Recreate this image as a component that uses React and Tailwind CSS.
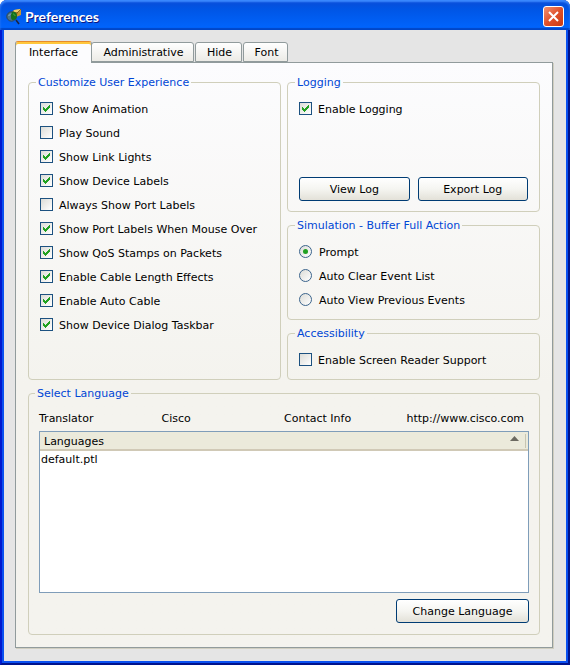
import { useState } from "react";

const experienceOptions = [
  ["Show Animation", true],
  ["Play Sound", false],
  ["Show Link Lights", true],
  ["Show Device Labels", true],
  ["Always Show Port Labels", false],
  ["Show Port Labels When Mouse Over", true],
  ["Show QoS Stamps on Packets", true],
  ["Enable Cable Length Effects", true],
  ["Enable Auto Cable", true],
  ["Show Device Dialog Taskbar", true],
];

const bufferActions = ["Prompt", "Auto Clear Event List", "Auto View Previous Events"];

function Group({ title, className = "", children }) {
  return (
    <fieldset className={`min-w-0 rounded-[4px] border border-[#d0cfbb] ${className}`}>
      <legend className="-ml-1 h-[14px] px-[2px] leading-4 text-[#0046d5]">{title}</legend>
      {children}
    </fieldset>
  );
}

function CheckBox({ label, defaultChecked }) {
  return (
    <label className="flex h-6 items-center gap-[6px]">
      <span className="mb-px grid size-[13px] shrink-0">
        <input
          type="checkbox"
          defaultChecked={defaultChecked}
          className="peer size-[13px] appearance-none border border-[#1c5180] bg-linear-to-br from-[#dcdcd7] to-white [grid-area:1/1]"
        />
        <svg
          viewBox="0 0 13 13"
          shapeRendering="crispEdges"
          aria-hidden="true"
          className="pointer-events-none hidden size-[13px] [grid-area:1/1] peer-checked:block"
        >
          <path
            fill="#21a121"
            d="M3 5h1v3h-1zM4 6h1v3h-1zM5 7h1v3h-1zM6 6h1v3h-1zM7 5h1v3h-1zM8 4h1v3h-1zM9 3h1v3h-1z"
          />
        </svg>
      </span>
      <span className="pt-[2px]">{label}</span>
    </label>
  );
}

function Radio({ label, checked, onChange }) {
  return (
    <label className="flex h-6 items-center gap-[7px]">
      <span className="mb-px grid size-[13px] shrink-0 place-items-center">
        <input
          type="radio"
          name="buffer-action"
          checked={checked}
          onChange={onChange}
          className="peer size-[13px] appearance-none rounded-full border border-[#3b648c] bg-linear-to-br from-[#dcdcd7] to-white [grid-area:1/1]"
        />
        <span className="pointer-events-none hidden size-[5px] rounded-full bg-[#21a121] [grid-area:1/1] peer-checked:block" />
      </span>
      <span className="pt-[2px]">{label}</span>
    </label>
  );
}

function PushButton({ className = "", children }) {
  return (
    <button
      type="button"
      className={`h-6 rounded-[3px] border border-[#003c74] bg-linear-to-b from-white via-[#f5f5f1] to-[#e3e1d8] pt-[2px] ${className}`}
    >
      {children}
    </button>
  );
}

function Tab({ active, children, className = "", onClick }) {
  return (
    <button
      type="button"
      role="tab"
      aria-selected={active}
      onClick={onClick}
      className={`rounded-t-[3px] border border-[#919b9c] ${
        active
          ? "z-10 -mb-px h-[22px] border-t-[#e68b2c] border-b-0 bg-[#fcfcfe] shadow-[inset_0_2px_0_#ffc73c]"
          : "h-[20px] bg-linear-to-b from-white to-[#ecebe6] pt-[2px] pl-[2px]"
      } ${className}`}
    >
      {children}
    </button>
  );
}

function AppIcon() {
  return (
    <svg viewBox="0 0 16 16" className="size-4" aria-hidden="true">
      <path d="M6 3 8 1l7-1v6l-5 2-4-2z" fill="#c8962f" />
      <path d="m8 1 7-1-3 3-5 1z" fill="#f0cf6c" />
      <path d="m7 3 4 1 4-4M11 4l-1 4" fill="none" stroke="#5a3f12" strokeWidth="0.7" />
      <circle cx="5.500" cy="7.500" r="4.700" fill="#4d7488" stroke="#2c4656" />
      <path d="M6 3c3-1 5 1 5 4s-2 4-4 4-2-2-2-4 0-3 1-4z" fill="#16701c" />
      <path d="M7 5c1 0 2 1 2 2" fill="none" stroke="#48b04a" />
      <path d="M2.500 7 5 4.500" stroke="#8fb6c9" />
      <path d="m10 11 3 4" stroke="#1a2340" strokeWidth="1.500" />
    </svg>
  );
}

const tabs = [
  ["Interface", "w-[77px]"],
  ["Administrative", "w-[103px] -ml-px"],
  ["Hide", "w-[47px] ml-px"],
  ["Font", "w-[45px] ml-px"],
];

export default function App() {
  const [tab, setTab] = useState("Interface");
  const [action, setAction] = useState("Prompt");

  return (
    <main className="flex min-h-screen flex-col rounded-t-[7px] border-x-2 border-b-2 border-[#0019cf] border-r-[#00138c] border-b-[#00138c] bg-[#e5e5e5] font-['DejaVu_Sans',Verdana,sans-serif] text-[11px] leading-[14px] text-black">
      <header className="-mx-[2px] flex h-[30px] items-center gap-[3px] rounded-t-[7px] bg-linear-to-b from-[#0a4bd6] from-0% via-[#0055e5] via-30% to-[#0066ff] pt-[3px] pr-[6px] pl-[6px] shadow-[inset_0_2px_2px_#3d8bff,inset_0_-2px_1px_#0046c8]">
        <AppIcon />
        <h1 className="flex-1 font-['Lato','Noto_Sans',sans-serif] text-[14px] font-bold text-white [text-shadow:1px_1px_#0a1883]">
          Preferences
        </h1>
        <button
          type="button"
          aria-label="Close"
          className="grid size-[21px] place-items-center rounded-[3px] border border-white bg-linear-to-br from-[#f0906f] via-[#e0502a] to-[#c93a10]"
        >
          <svg viewBox="0 0 11 11" className="size-[11px]" aria-hidden="true">
            <path d="m1 1 9 9M10 1l-9 9" stroke="white" strokeWidth="2" />
          </svg>
        </button>
      </header>

      <div className="flex flex-1 flex-col border-x-2 border-b-2 border-[#0a50f0] pt-[11px] pr-[13px] pb-[13px] pl-[11px]">
        <div role="tablist" className="flex items-end">
          {tabs.map(([name, size]) => (
            <Tab key={name} active={tab === name} className={size} onClick={() => setTab(name)}>
              {name}
            </Tab>
          ))}
        </div>

        <div
          role="tabpanel"
          className="flex flex-1 flex-col gap-[6px] border border-[#919b9c] bg-linear-to-b from-[#fcfcfe] to-[#f4f3ee] to-55% p-3 shadow-[1px_1px_0_#d0cec0]"
        >
          <div className="grid grid-cols-2 gap-[6px]">
            <Group title="Customize User Experience" className="px-[11px] pb-[41px]">
              <div className="pt-2">
                {experienceOptions.map(([label, on]) => (
                  <CheckBox key={label} label={label} defaultChecked={on} />
                ))}
              </div>
            </Group>

            <div className="flex flex-col gap-[6px]">
              <Group title="Logging" className="flex-1 px-[11px] pb-[10px]">
                <div className="pt-2">
                  <CheckBox label="Enable Logging" defaultChecked />
                  <div className="mt-14 grid grid-cols-2 gap-2">
                    <PushButton>View Log</PushButton>
                    <PushButton>Export Log</PushButton>
                  </div>
                </div>
              </Group>

              <Group title="Simulation - Buffer Full Action" className="px-[11px] pb-[7px]">
                <div className="pt-2">
                  {bufferActions.map((name) => (
                    <Radio
                      key={name}
                      label={name}
                      checked={action === name}
                      onChange={() => setAction(name)}
                    />
                  ))}
                </div>
              </Group>

              <Group title="Accessibility" className="px-[11px] pb-[7px]">
                <div className="pt-2">
                  <CheckBox label="Enable Screen Reader Support" />
                </div>
              </Group>
            </div>
          </div>

          <Group title="Select Language" className="flex flex-1 flex-col px-[10px] pb-[11px]">
            <div className="grid grid-cols-4 pt-3 pb-[5px] whitespace-nowrap">
              <span>Translator</span>
              <span>Cisco</span>
              <span>Contact Info</span>
              <span>http://www.cisco.com</span>
            </div>
            <div className="min-h-[162px] flex-1 border border-[#7f9db9] bg-white">
              <table className="w-full border-collapse text-left">
                <thead>
                  <tr className="h-[18px] border-b-2 border-[#d0c9b6] bg-[#ebeadb]">
                    <th className="px-1 py-0 font-normal" aria-sort="ascending">
                      <span className="flex items-center justify-between pt-[2px]">
                        Languages
                        <svg viewBox="0 0 9 5" className="mr-[2px] mb-[6px] h-[5px] w-[9px]" aria-hidden="true">
                          <path d="M0 5 4.500 0 9 5z" fill="#6b6960" />
                        </svg>
                      </span>
                    </th>
                    <th className="w-[3px] p-0" aria-hidden="true">
                      <span className="block h-[14px] w-px bg-[#c7c5b2]" />
                    </th>
                  </tr>
                </thead>
                <tbody>
                  <tr>
                    <td className="px-[1px] py-[2px]">default.ptl</td>
                  </tr>
                </tbody>
              </table>
            </div>
            <PushButton className="mt-[6px] w-[133px] self-end">Change Language</PushButton>
          </Group>
        </div>
      </div>
    </main>
  );
}
